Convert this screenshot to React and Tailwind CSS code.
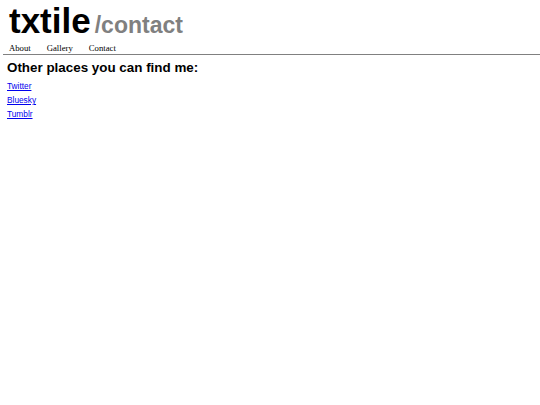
import React from "react";

const links = [
  { name: "Twitter", href: "#" },
  { name: "Bluesky", href: "#" },
  { name: "Tumblr", href: "#" },
];

export default function App() {
  return (
    <div className="min-h-[405px] bg-white text-black">
      {/* header */}
      <header className="pl-[9px] pt-[3px]">
        <div className="flex items-baseline gap-[4px] h-[36px] leading-[36px] font-['Liberation_Sans',Arial,sans-serif] font-bold">
          <span className="text-[35px] leading-[36px]">txtile</span>
          <span className="text-[23px] leading-[36px] text-[#808080]">/contact</span>
        </div>
        <nav className="flex gap-[16px] mt-[4px] text-black font-['Liberation_Serif','Times_New_Roman',serif] text-[8.7px] leading-[11px]">
          <a href="#" className="text-black no-underline">About</a>
          <a href="#" className="text-black no-underline">Gallery</a>
          <a href="#" className="text-black no-underline">Contact</a>
        </nav>
      </header>
      <div className="ml-[3px] mt-0 h-px bg-[#808080]" />

      {/* content */}
      <main className="px-[7px] font-['Liberation_Sans',Arial,sans-serif]">
        <h2 className="text-[13.4px] font-bold leading-[16px] mt-[5px] mb-[3px]">
          Other places you can find me:
        </h2>
        <ul className="text-[8.3px] leading-[14px]">
          {links.map((l) => (
            <li key={l.name}>
              <a href={l.href} className="text-[#0000ee] underline">
                {l.name}
              </a>
            </li>
          ))}
        </ul>
      </main>
    </div>
  );
}
